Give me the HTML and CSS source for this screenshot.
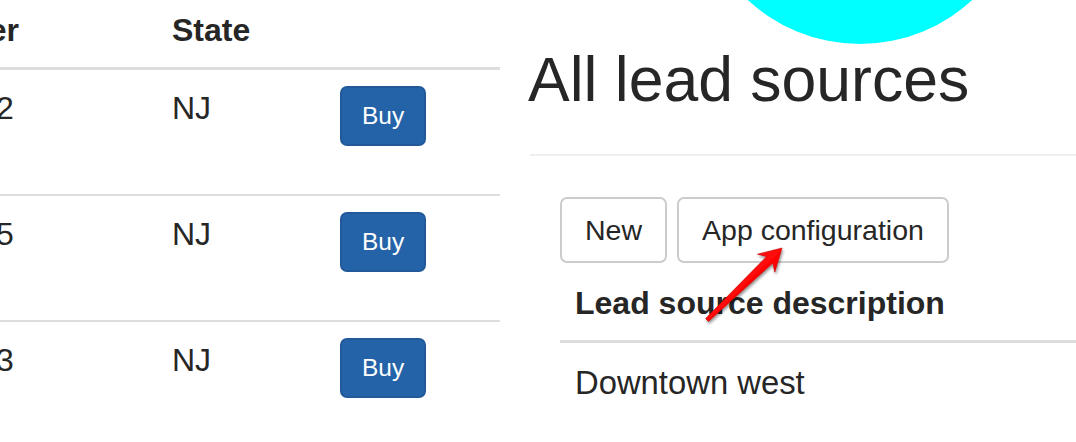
FILE: index.html
```html
<!DOCTYPE html>
<html lang="en">
<head>
<meta charset="utf-8">
<title>All lead sources</title>
<link rel="stylesheet" href="styles.css">
</head>
<body>
<div class="page">
  <section class="leads-pane">
    <table class="leads-table">
      <colgroup>
        <col class="col-number">
        <col class="col-state">
        <col class="col-action">
      </colgroup>
      <thead>
        <tr>
          <th>Phone number</th>
          <th>State</th>
          <th></th>
        </tr>
      </thead>
      <tbody>
        <tr>
          <td><div class="cell-stack">(201) 555-0122</div></td>
          <td>NJ</td>
          <td><button class="btn-buy" type="button">Buy</button></td>
        </tr>
        <tr>
          <td><div class="cell-stack">(201) 555-0145</div></td>
          <td>NJ</td>
          <td><button class="btn-buy" type="button">Buy</button></td>
        </tr>
        <tr>
          <td><div class="cell-stack">(201) 555-0133</div></td>
          <td>NJ</td>
          <td><button class="btn-buy" type="button">Buy</button></td>
        </tr>
      </tbody>
    </table>
  </section>

  <section class="sources-pane">
    <h1 class="page-title">All lead sources</h1>
    <hr class="page-rule">
    <div class="sources-body">
      <div class="toolbar">
        <button class="btn-default" type="button">New</button>
        <button class="btn-default" type="button">App configuration</button>
      </div>
      <table class="sources-table">
        <thead>
          <tr><th>Lead source description</th></tr>
        </thead>
        <tbody>
          <tr><td>Downtown west</td></tr>
        </tbody>
      </table>
    </div>
  </section>
</div>

<div class="cursor-spot"></div>

<svg class="annotation-arrow" width="1076" height="442" viewBox="0 0 1076 442" aria-hidden="true">
  <defs>
    <linearGradient id="arrowFill" x1="0" y1="0" x2="1" y2="1">
      <stop offset="0" stop-color="#ff2a2a"/>
      <stop offset="0.6" stop-color="#ff0000"/>
      <stop offset="1" stop-color="#d40000"/>
    </linearGradient>
    <filter id="arrowShadow" x="-20%" y="-20%" width="140%" height="140%">
      <feDropShadow dx="1" dy="2" stdDeviation="1.4" flood-color="#000" flood-opacity="0.45"/>
    </filter>
  </defs>
  <polygon filter="url(#arrowShadow)" fill="url(#arrowFill)" stroke="#c40000" stroke-width="0.6" stroke-linejoin="round"
    points="705.6,318.6 766.6,256.6 757.5,254.2 782,248 774.8,272.2 772.8,263 708.4,321.4"/>
</svg>
</body>
</html>
```

FILE: styles.css
```css
html, body {
  margin: 0;
  padding: 0;
}

body {
  position: relative;
  width: 1076px;
  height: 442px;
  overflow: hidden;
  background: #ffffff;
  color: #262626;
  font-family: "Liberation Sans", Arial, Helvetica, sans-serif;
}

.page {
  display: flex;
  align-items: flex-start;
}

/* ---------- left pane: leads table ---------- */

.leads-pane {
  flex: 0 0 500px;
  width: 500px;
  overflow: hidden;
}

.leads-table {
  width: 720px;
  margin: -6px 0 0 -220px;
  border-collapse: separate;
  border-spacing: 0;
  font-size: 32px;
  line-height: 45px;
  table-layout: fixed;
}

.col-number { width: 377px; }
.col-state { width: 168px; }
.col-action { width: 175px; }

.leads-table th,
.sources-table th {
  text-align: left;
  font-weight: bold;
  padding: 14px 15px;
  border-bottom: 3px solid #dddddd;
  vertical-align: bottom;
  white-space: nowrap;
}

.leads-table td,
.sources-table td {
  padding: 16px 15px 18px;
  vertical-align: top;
  white-space: nowrap;
}

.sources-table td {
  padding-top: 17px;
  font-size: 32.8px;
}

.leads-table tbody tr + tr td {
  border-top: 2px solid #dddddd;
}

.cell-stack {
  min-height: 90px;
}

.btn-buy {
  display: inline-block;
  vertical-align: top;
  margin: 0;
  padding: 10px 20px;
  font-family: inherit;
  font-size: 24.5px;
  line-height: 36px;
  color: #ffffff;
  background: #2563a8;
  border: 2px solid #22599a;
  border-radius: 7px;
}

/* ---------- right pane: lead sources ---------- */

.sources-pane {
  flex: 1 1 auto;
  min-width: 0;
  padding: 45px 0 0 28px;
}

.page-title {
  margin: 0;
  font-size: 62.5px;
  line-height: 69px;
  font-weight: normal;
  color: #262626;
  white-space: nowrap;
}

.page-rule {
  margin: 40px 0 0 2px;
  border: 0;
  border-top: 2px solid #eeeeee;
  height: 0;
}

.sources-body {
  margin-left: 32px;
  padding-top: 41px;
}

.toolbar {
  display: flex;
  gap: 10px;
}

.btn-default {
  margin: 0;
  padding: 11px 23px;
  font-family: inherit;
  font-size: 28.5px;
  line-height: 40px;
  color: #262626;
  background: #ffffff;
  border: 2px solid #cccccc;
  border-radius: 7px;
  white-space: nowrap;
}

.sources-table {
  width: 100%;
  margin-top: 4px;
  border-collapse: separate;
  border-spacing: 0;
  font-size: 32px;
  line-height: 45px;
}

/* ---------- overlays ---------- */

.cursor-spot {
  position: absolute;
  left: 695px;
  top: -286px;
  width: 330px;
  height: 330px;
  border-radius: 50%;
  background: #00ffff;
}

.annotation-arrow {
  position: absolute;
  left: 0;
  top: 0;
  pointer-events: none;
}
```
